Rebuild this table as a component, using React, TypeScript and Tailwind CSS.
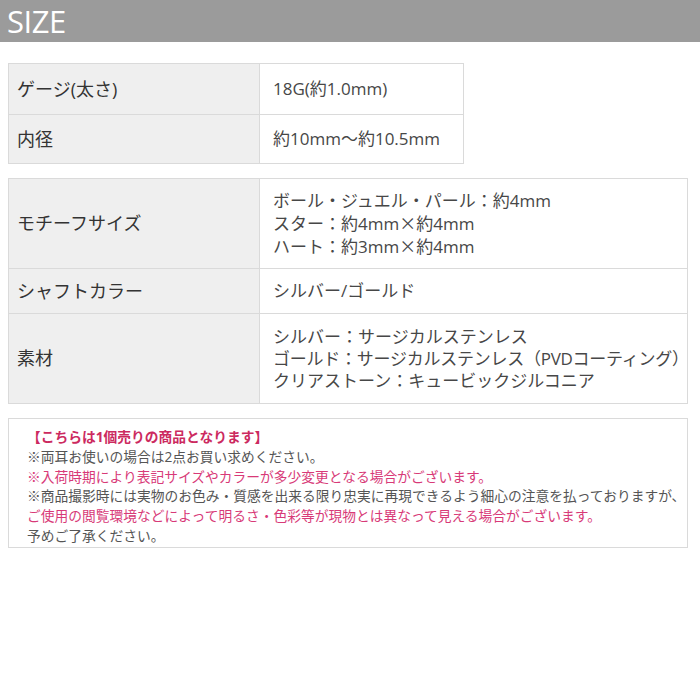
const font = { fontFamily: '"Open Sans", "Noto Sans CJK JP", sans-serif' };
const cjk = { fontFamily: '"Noto Sans CJK JP", sans-serif' };

type Row = { label: string; value: React.ReactNode[]; h: string };

const X = () => <span style={cjk}>×</span>;

const basic: Row[] = [
  { label: "ゲージ(太さ)", value: ["18G(約1.0mm)"], h: "h-[51px]" },
  { label: "内径", value: ["約10mm〜約10.5mm"], h: "h-[49px]" },
];

const detail: Row[] = [
  {
    label: "モチーフサイズ",
    value: [
      "ボール・ジュエル・パール：約4mm",
      <>スター：約4mm<X />約4mm</>,
      <>ハート：約3mm<X />約4mm</>,
    ],
    h: "h-[90px]",
  },
  { label: "シャフトカラー", value: ["シルバー/ゴールド"], h: "h-[45px]" },
  {
    label: "素材",
    value: [
      "シルバー：サージカルステンレス",
      <span className="tracking-[-0.25px] whitespace-nowrap">ゴールド：サージカルステンレス（PVDコーティング）</span>,
      "クリアストーン：キュービックジルコニア",
    ],
    h: "h-[90px]",
  },
];

function SpecTable({ rows, width }: { rows: Row[]; width: string }) {
  return (
    <table className={`${width} table-fixed border-collapse border border-[#dadada]`}>
      <colgroup>
        <col className="w-[251px]" />
        <col />
      </colgroup>
      <tbody>
        {rows.map((r) => (
          <tr key={r.label} className={`${r.h} border-b border-[#dadada]`}>
            <td className="bg-[#efefef] border-r border-[#dadada] pl-[8px] text-[18px] text-[#333] align-middle">
              {r.label}
            </td>
            <td className="bg-white pl-[13px] text-[17px] text-[#474747] align-middle leading-[22px]">
              {r.value.map((v, i) => (
                <div key={i}>{v}</div>
              ))}
            </td>
          </tr>
        ))}
      </tbody>
    </table>
  );
}

export default function App() {
  return (
    <div className="w-[700px] h-[700px] bg-white" style={font}>
      <div className="h-[42px] bg-[#9b9b9b] flex items-center pl-[7px]">
        <h2 className="text-white text-[31px] tracking-[-0.5px] leading-none">SIZE</h2>
      </div>

      <div className="px-[8px] pt-[21px] flex flex-col gap-[14px]">
        <SpecTable rows={basic} width="w-[456px]" />
        <SpecTable rows={detail} width="w-[680px]" />

        <div className="w-[680px] h-[130px] border border-[#dadada] pl-[18px] pt-[8px] text-[13.75px] leading-[19.8px] text-[#555]">
          <p className="text-[#cc2a5f] font-bold">【こちらは1個売りの商品となります】</p>
          <p>※両耳お使いの場合は2点お買い求めください。</p>
          <p className="text-[#d83a78]">※入荷時期により表記サイズやカラーが多少変更となる場合がございます。</p>
          <p>※商品撮影時には実物のお色み・質感を出来る限り忠実に再現できるよう細心の注意を払っておりますが、</p>
          <p className="text-[#d83a78]">ご使用の閲覧環境などによって明るさ・色彩等が現物とは異なって見える場合がございます。</p>
          <p>予めご了承ください。</p>
        </div>
      </div>
    </div>
  );
}
